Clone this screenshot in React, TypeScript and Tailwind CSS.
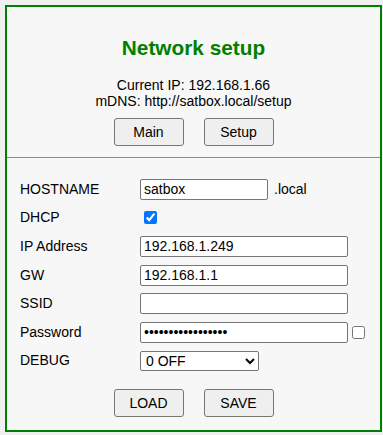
const btn =
  'w-[70px] h-[28px] border border-[#767676] rounded-[3px] bg-[#efefef] text-[14px] text-black leading-none'

const field =
  'h-[21px] border border-[#767676] rounded-[2px] bg-white px-[3px] text-[14px] text-black outline-none'

function Row({ label, children }: { label: string; children: React.ReactNode }) {
  return (
    <div className="flex items-center h-[28.6px]">
      <div className="w-[120px] text-[14px]">{label}</div>
      <div className="flex items-center">{children}</div>
    </div>
  )
}

export default function App() {
  return (
    <div
      className="w-[383px] h-[435px] bg-[#f0f0f0] pt-[5px] pl-[5px] text-black"
      style={{ fontFamily: '"Liberation Sans", Arial, sans-serif' }}
    >
      <div className="w-[377px] h-[427px] border-2 border-[#008000] bg-[#f7f7f7] flex flex-col">
        <div className="pt-[29px] flex flex-col items-center">
          <h1 className="text-[20.8px] font-bold text-[#008000] leading-[24px]">Network setup</h1>
          <div className="mt-[18px] text-[14px] leading-[15.5px] text-center">
            <div>Current IP: 192.168.1.66</div>
            <div>mDNS: http://satbox.local/setup</div>
          </div>
          <div className="mt-[9px] flex gap-[20px]">
            <button className={btn}>Main</button>
            <button className={btn}>Setup</button>
          </div>
        </div>

        <div className="mt-[11px] h-px bg-[#8a8a8a]" />

        <div className="mt-[17px] pl-[13px] flex flex-col">
          <Row label="HOSTNAME">
            <input className={`${field} w-[128px]`} defaultValue="satbox" />
            <span className="ml-[6px] text-[14px]">.local</span>
          </Row>
          <Row label="DHCP">
            <input type="checkbox" defaultChecked className="ml-[4px] w-[13px] h-[13px] accent-[#0075ff]" />
          </Row>
          <Row label="IP Address">
            <input className={`${field} w-[208px]`} defaultValue="192.168.1.249" />
          </Row>
          <Row label="GW">
            <input className={`${field} w-[208px]`} defaultValue="192.168.1.1" />
          </Row>
          <Row label="SSID">
            <input className={`${field} w-[208px]`} defaultValue="" />
          </Row>
          <Row label="Password">
            <input type="password" className={`${field} w-[208px] text-[13px]`} defaultValue="xxxxxxxxxxxxxxxxx" />
            <input type="checkbox" className="ml-[4px] w-[13px] h-[13px]" />
          </Row>
          <Row label="DEBUG">
            <select className="h-[20px] w-[119px] border border-[#767676] rounded-[2px] bg-white text-[14px] text-black pl-[1px]">
              <option>0 OFF</option>
              <option>1 ERROR</option>
              <option>2 INFO</option>
            </select>
          </Row>
        </div>

        <div className="mt-[14px] flex justify-center gap-[20px]">
          <button className={btn}>LOAD</button>
          <button className={btn}>SAVE</button>
        </div>
      </div>
    </div>
  )
}
